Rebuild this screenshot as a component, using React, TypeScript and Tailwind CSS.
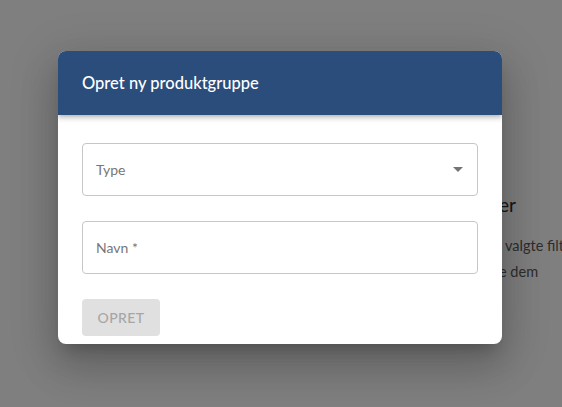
import React from "react";

const font = { fontFamily: "Lato, 'Noto Sans', sans-serif" };

function Field({ label, select }: { label: string; select?: boolean }) {
  return (
    <div className="flex h-[53px] w-full items-center justify-between rounded border border-[#c6c6c6] pl-[13px] pr-[13px]">
      <span className="text-[14px] text-[#777777]">{label}</span>
      {select && (
        <svg width="10" height="5" viewBox="0 0 10 5" className="mr-[1px]">
          <path d="M0 0 L10 0 L5 5 Z" fill="#747474" />
        </svg>
      )}
    </div>
  );
}

export default function App() {
  return (
    <div className="relative h-[407px] w-[562px] overflow-hidden bg-white" style={font}>
      {/* page behind the dialog */}
      <div className="whitespace-nowrap pl-[499px] pt-[191px]">
        <div className="text-[19px] leading-[28px] text-[#2e2e2e]">er</div>
        <div className="mt-[14px] text-[14.5px] leading-[26px] text-[#5a5a5a]">
          <div className="pl-[6px]">valgte filtre</div>
          <div>e dem</div>
        </div>
      </div>

      {/* overlay */}
      <div className="absolute inset-0 flex items-start bg-black/50 pl-[58px] pt-[51px]">
        <div className="w-[444px] overflow-hidden rounded-lg bg-white shadow-[0_11px_15px_-7px_rgba(0,0,0,0.2),0_24px_38px_3px_rgba(0,0,0,0.14),0_9px_46px_8px_rgba(0,0,0,0.12)]">
          <div className="relative z-10 flex h-16 items-center bg-[#2b4d7c] px-6 shadow-[0_2px_4px_-1px_rgba(0,0,0,0.2),0_4px_5px_0_rgba(0,0,0,0.14)]">
            <span className="text-[16.5px] font-medium text-white">Opret ny produktgruppe</span>
          </div>
          <div className="px-6 pb-2 pt-7">
            <Field label="Type" select />
            <div className="mt-[25px]">
              <Field label="Navn *" />
            </div>
            <button className="mt-[25px] flex h-[37px] w-[78px] items-center justify-center rounded bg-[#e0e0e0] text-[14px] font-medium tracking-[0.03em] text-[#a6a6a6]">
              OPRET
            </button>
          </div>
        </div>
      </div>
    </div>
  );
}
